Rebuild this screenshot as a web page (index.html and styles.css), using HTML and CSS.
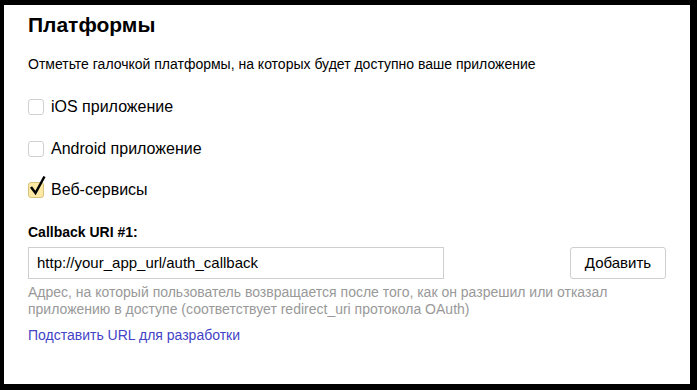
FILE: index.html
```html
<!DOCTYPE html>
<html>
<head>
    <title>Платформы</title>
    <link rel="stylesheet" href="styles.css">
</head>
<body>
    <div class="panel">
        <h2 class="title">Платформы</h2>
        <p class="hint">Отметьте галочкой платформы, на которых будет доступно ваше приложение</p>

        <div class="platforms">
            <label class="platform">
                <span class="box"></span>
                <span>iOS приложение</span>
            </label>
            <label class="platform">
                <span class="box"></span>
                <span>Android приложение</span>
            </label>
            <label class="platform">
                <span class="box checked">
                    <svg class="tick" width="20" height="22" viewBox="0 0 20 22">
                        <path d="M3 12 L7.5 18 L16.5 1.5" fill="none" stroke="#000" stroke-width="2.5"/>
                    </svg>
                </span>
                <span>Веб-сервисы</span>
            </label>
        </div>

        <div class="callback">
            <div class="field-label">Callback URI #1:</div>
            <div class="field-row">
                <input class="field" type="text" value="http://your_app_url/auth_callback">
                <button class="btn">Добавить</button>
            </div>
            <p class="note">Адрес, на который пользователь возвращается после того, как он разрешил или отказал приложению в доступе (соответствует redirect_uri протокола OAuth)</p>
            <a class="dev-link" href="#">Подставить URL для разработки</a>
        </div>
    </div>
</body>
</html>
```

FILE: styles.css
```css
html, body {
    margin: 0;
    background: #000;
}
body {
    padding: 5px 7px 6px 4px;
    font-family: "Liberation Sans", Arial, sans-serif;
    color: #000;
}
.panel {
    background: #fff;
    height: 379px;
    padding: 0 24px;
    box-sizing: border-box;
    overflow: hidden;
}
.title {
    margin: 0;
    padding-top: 8px;
    font-size: 21px;
    line-height: 24px;
    font-weight: bold;
}
.hint {
    margin: 19px 0 0;
    font-size: 14px;
    line-height: 16px;
}
.platforms {
    margin-top: 27px;
}
.platform {
    display: flex;
    align-items: center;
    gap: 7px;
    height: 16px;
    margin-bottom: 25.5px;
    font-size: 16px;
}
.box {
    position: relative;
    width: 14px;
    height: 14px;
    border: 1px solid #d0d0d0;
    border-radius: 3px;
    background: #fff;
    flex: none;
}
.box.checked {
    background: #fde9a4;
    border-color: #d9c27c;
}
.tick {
    position: absolute;
    left: -1px;
    top: -8px;
}
.callback {
    margin-top: 17px;
}
.field-label {
    font-size: 14px;
    font-weight: bold;
    line-height: 16px;
}
.field-row {
    display: flex;
    justify-content: space-between;
    align-items: flex-start;
    margin-top: 7px;
}
.field {
    width: 416px;
    height: 32px;
    box-sizing: border-box;
    border: 1px solid #cfcfcf;
    padding: 0 8px;
    font-family: "Liberation Sans", Arial, sans-serif;
    font-size: 15px;
    color: #000;
    outline: none;
}
.btn {
    width: 96px;
    height: 32px;
    background: #fff;
    border: 1px solid #cfcfcf;
    border-radius: 3px;
    font-family: "Liberation Sans", Arial, sans-serif;
    font-size: 15px;
    color: #000;
    padding: 0;
}
.note {
    margin: 5px 0 0;
    font-size: 14px;
    line-height: 17px;
    color: #999;
}
.dev-link {
    display: inline-block;
    margin-top: 9px;
    font-size: 14px;
    line-height: 16px;
    color: #4343c6;
    text-decoration: none;
}
```
